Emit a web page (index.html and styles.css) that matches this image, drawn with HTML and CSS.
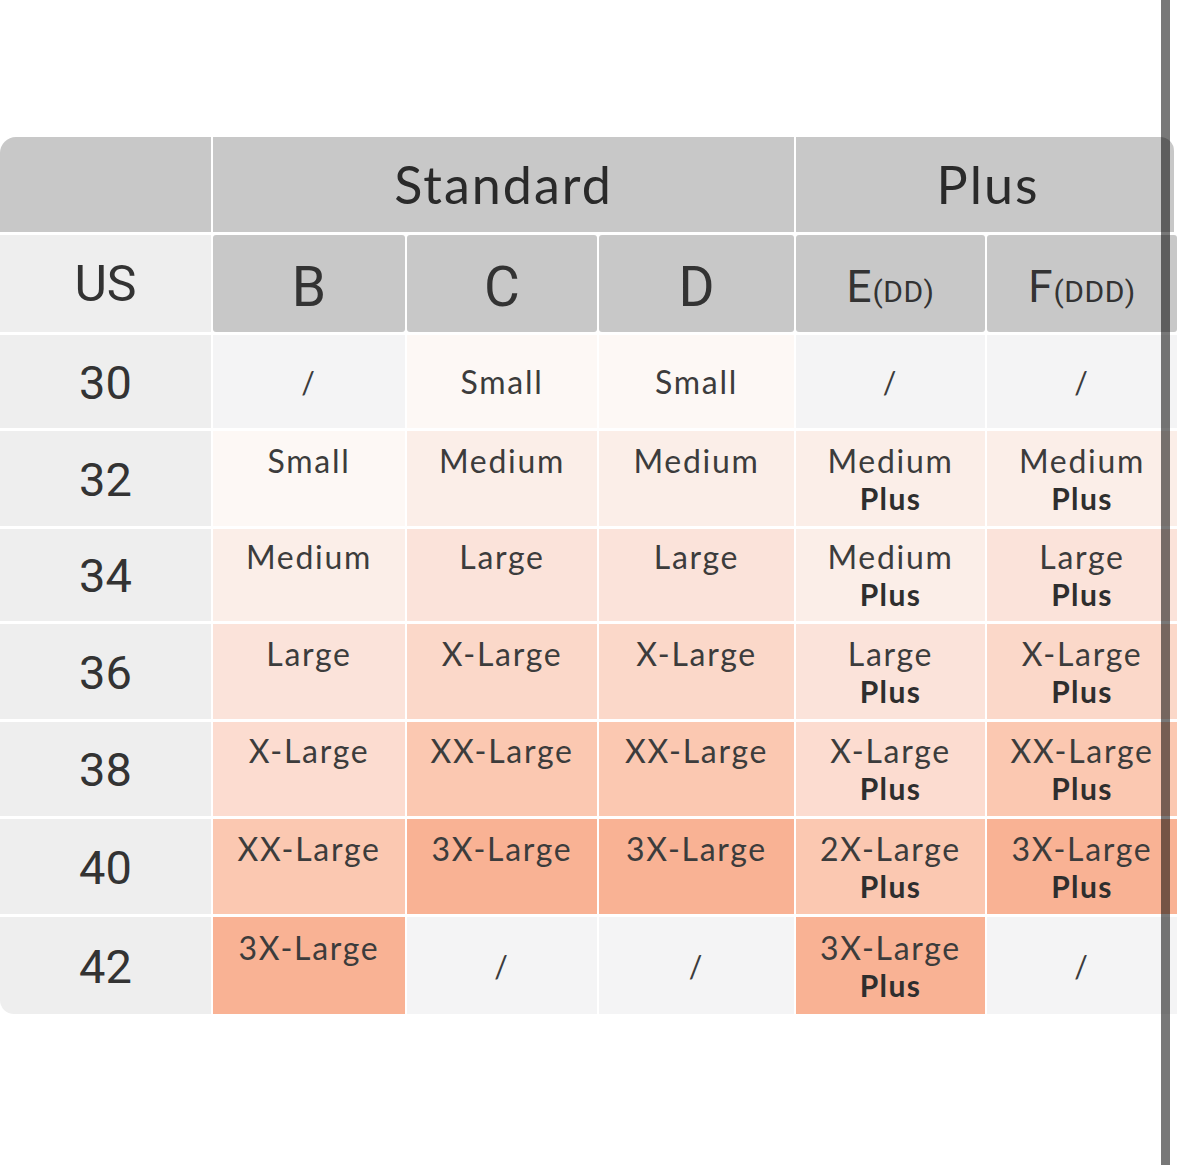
FILE: index.html
```html
<!DOCTYPE html>
<html lang="en">
<head>
<meta charset="utf-8">
<title>Size chart</title>
<link rel="stylesheet" href="styles.css">
</head>
<body>
<main class="page">
  <div class="chart">
    <div class="h1 corner-tl"></div>
    <div class="h1 span3">Standard</div>
    <div class="h1 span2 corner-tr">Plus</div>

    <div class="side us">US</div>
    <div class="cup">B</div>
    <div class="cup">C</div>
    <div class="cup">D</div>
    <div class="cup cup-sm">E<small>(DD)</small></div>
    <div class="cup cup-sm">F<small>(DDD)</small></div>

    <div class="side">30</div>
    <div class="cell none">/</div>
    <div class="cell t0"><span>Small</span></div>
    <div class="cell t0"><span>Small</span></div>
    <div class="cell none">/</div>
    <div class="cell none">/</div>

    <div class="side">32</div>
    <div class="cell t0"><span>Small</span><b>&nbsp;</b></div>
    <div class="cell t1"><span>Medium</span><b>&nbsp;</b></div>
    <div class="cell t1"><span>Medium</span><b>&nbsp;</b></div>
    <div class="cell t1"><span>Medium</span><b>Plus</b></div>
    <div class="cell t1"><span>Medium</span><b>Plus</b></div>

    <div class="side">34</div>
    <div class="cell t1"><span>Medium</span><b>&nbsp;</b></div>
    <div class="cell t2"><span>Large</span><b>&nbsp;</b></div>
    <div class="cell t2"><span>Large</span><b>&nbsp;</b></div>
    <div class="cell t1"><span>Medium</span><b>Plus</b></div>
    <div class="cell t2"><span>Large</span><b>Plus</b></div>

    <div class="side">36</div>
    <div class="cell t2"><span>Large</span><b>&nbsp;</b></div>
    <div class="cell t3"><span>X-Large</span><b>&nbsp;</b></div>
    <div class="cell t3"><span>X-Large</span><b>&nbsp;</b></div>
    <div class="cell t2"><span>Large</span><b>Plus</b></div>
    <div class="cell t3"><span>X-Large</span><b>Plus</b></div>

    <div class="side">38</div>
    <div class="cell t3b"><span>X-Large</span><b>&nbsp;</b></div>
    <div class="cell t4"><span>XX-Large</span><b>&nbsp;</b></div>
    <div class="cell t4"><span>XX-Large</span><b>&nbsp;</b></div>
    <div class="cell t3b"><span>X-Large</span><b>Plus</b></div>
    <div class="cell t4"><span>XX-Large</span><b>Plus</b></div>

    <div class="side">40</div>
    <div class="cell t4"><span>XX-Large</span><b>&nbsp;</b></div>
    <div class="cell t5"><span>3X-Large</span><b>&nbsp;</b></div>
    <div class="cell t5"><span>3X-Large</span><b>&nbsp;</b></div>
    <div class="cell t4"><span>2X-Large</span><b>Plus</b></div>
    <div class="cell t5"><span>3X-Large</span><b>Plus</b></div>

    <div class="side corner-bl">42</div>
    <div class="cell t5"><span>3X-Large</span><b>&nbsp;</b></div>
    <div class="cell none">/</div>
    <div class="cell none">/</div>
    <div class="cell t5"><span>3X-Large</span><b>Plus</b></div>
    <div class="cell none">/</div>
  </div>
  <div class="scrollbar"></div>
</main>
</body>
</html>
```

FILE: styles.css
```css
html, body {
  margin: 0;
  padding: 0;
  background: #ffffff;
}

.page {
  position: relative;
  width: 1179px;
  height: 1165px;
  padding-top: 137px;
  box-sizing: border-box;
  overflow: hidden;
}

.chart {
  display: grid;
  grid-template-columns: 211px 192px 190px 195px 189px 190px;
  grid-template-rows: 95px 97px 93px 95px 92px 95px 94px 95px 97px;
  column-gap: 2px;
  row-gap: 3px;
  width: 1178px;
  background: #ffffff;
  font-family: "Lato", "Open Sans", sans-serif;
  color: #3a3a3a;
}

.h1 {
  background: #c8c8c8;
  display: flex;
  align-items: center;
  justify-content: center;
  font-family: "Lato", sans-serif;
  font-size: 52px;
  letter-spacing: 2px;
  color: #2a2a2a;
  padding-bottom: 2px;
}

.span3 { grid-column: span 3; }
.span2 { grid-column: span 2; margin-right: 3px; padding-left: 6px; }

.corner-tl { border-top-left-radius: 16px; }
.corner-tr { border-top-right-radius: 14px; }
.corner-bl { border-bottom-left-radius: 14px; }

.side {
  background: #eeeeee;
  display: flex;
  align-items: center;
  justify-content: center;
  font-family: "Roboto", sans-serif;
  font-size: 47px;
  color: #333333;
  padding-top: 1px;
}

.side.us {
  font-size: 50px;
  padding-top: 0;
}

.cup {
  background: #c8c8c8;
  display: flex;
  align-items: baseline;
  justify-content: center;
  padding-top: 25px;
  box-sizing: border-box;
  font-family: "Roboto", sans-serif;
  font-size: 55px;
  color: #333333;
  line-height: 1;
  border-radius: 3px;
}

.cup small {
  font-size: 30px;
  margin-left: 1px;
  letter-spacing: 0.5px;
}

.cup.cup-sm {
  font-size: 44px;
  padding-top: 30px;
}

.cell {
  display: flex;
  flex-direction: column;
  align-items: center;
  justify-content: center;
  font-size: 32px;
  line-height: 38px;
  color: #3c3c3c;
  letter-spacing: 1.7px;
}

.cell span {
  white-space: nowrap;
}

.cell b {
  font-weight: 700;
  font-size: 30px;
  line-height: 36px;
  letter-spacing: 1.4px;
  color: #2e2e2e;
}

.none { background: #f4f4f5; font-size: 30px; }
.t0 { background: #fdf8f5; }
.t1 { background: #fbeee8; }
.t2 { background: #fbe3da; }
.t3 { background: #fbd8c9; }
.t3b { background: #fcdcd0; }
.t4 { background: #fbc8b1; }
.t5 { background: #f9b294; }

.scrollbar {
  position: absolute;
  top: 0;
  left: 1161px;
  width: 9px;
  height: 1165px;
  background: rgba(0, 0, 0, 0.53);
}
```
